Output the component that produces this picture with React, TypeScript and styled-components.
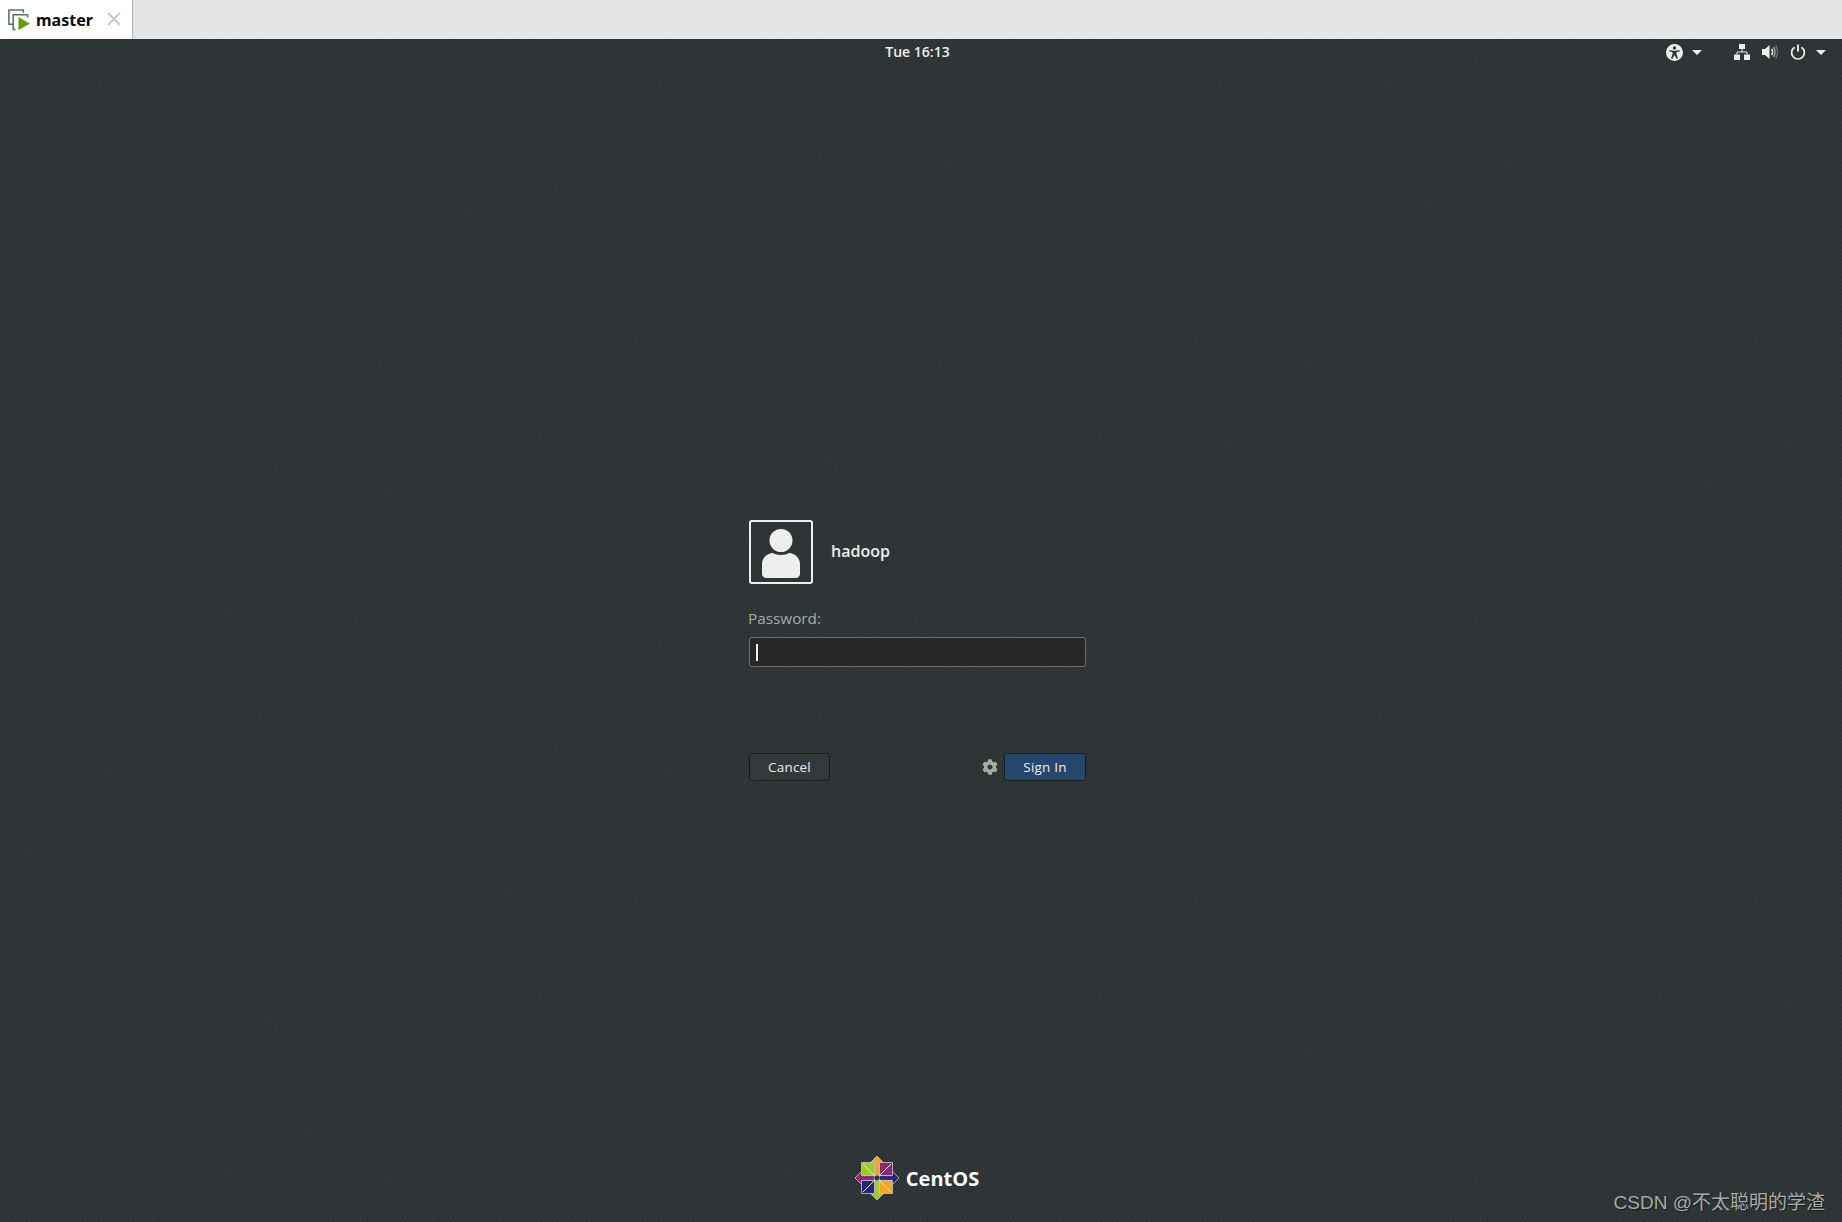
import React from "react";
import styled, { createGlobalStyle } from "styled-components";
import { FaCog } from "react-icons/fa";

const GlobalStyle = createGlobalStyle`
    html, body {
        margin: 0;
        height: 100%;
        background: #2e3436;
    }
    #root {
        height: 100%;
    }
`;

const App: React.FC = () => {
    return (
        <Page>
            <GlobalStyle />
            <TabBar>
                <Tab>
                    <VmIcon />
                    <TabTitle>master</TabTitle>
                    <CloseIcon />
                </Tab>
            </TabBar>
            <Screen>
                <TopBar>
                    <span />
                    <Clock>Tue 16:13</Clock>
                    <StatusArea>
                        <AccessGroup>
                            <AccessibilityIcon />
                            <Caret />
                        </AccessGroup>
                        <SystemGroup>
                            <NetworkIcon />
                            <VolumeIcon />
                            <PowerGroup>
                                <PowerIcon />
                                <Caret />
                            </PowerGroup>
                        </SystemGroup>
                    </StatusArea>
                </TopBar>
                <Login>
                    <UserRow>
                        <Avatar>
                            <AvatarIcon />
                        </Avatar>
                        <UserName>hadoop</UserName>
                    </UserRow>
                    <PasswordLabel>Password:</PasswordLabel>
                    <Entry>
                        <TextCursor />
                    </Entry>
                    <Buttons>
                        <Button>Cancel</Button>
                        <RightButtons>
                            <GearIcon />
                            <Button primary>Sign In</Button>
                        </RightButtons>
                    </Buttons>
                </Login>
                <Brand>
                    <CentosMark />
                    <BrandName>CentOS</BrandName>
                </Brand>
            </Screen>
            <Watermark>CSDN @不太聪明的学渣</Watermark>
        </Page>
    );
};

const VmIcon = () => (
    <svg width="23" height="23" viewBox="0 0 24 24" fill="none">
        <path d="M7 17H2V2h15v3" stroke="#5c6b78" strokeWidth="1.6" />
        <path d="M9 22.5H6.5V7H21.5v3" stroke="#5c6b78" strokeWidth="1.6" />
        <path d="M12 9.5L24 16.5L12 23Z" fill="#5aa012" />
    </svg>
);

const CloseIcon = () => (
    <CloseSvg width="14" height="14" viewBox="0 0 14 14">
        <path d="M1 1L13 13M13 1L1 13" stroke="#c8c8c8" strokeWidth="2" />
    </CloseSvg>
);

const Caret = () => (
    <svg width="10" height="5" viewBox="0 0 10 5">
        <path d="M0 0H10L5 5Z" fill="#eeeeec" />
    </svg>
);

const AccessibilityIcon = () => (
    <svg width="17" height="17" viewBox="0 0 17 17">
        <circle cx="8.5" cy="8.5" r="8.5" fill="#eeeeec" />
        <circle cx="8.5" cy="4" r="1.7" fill="#2e3436" />
        <path
            d="M3.5 6L7 6.7H10L13.5 6L13.8 7.2L10.5 8.2V10.2L12 14.5L10.8 15L8.5 11L6.2 15L5 14.5L6.5 10.2V8.2L3.2 7.2Z"
            fill="#2e3436"
        />
    </svg>
);

const NetworkIcon = () => (
    <svg width="16" height="16" viewBox="0 0 16 16">
        <rect x="5" y="0" width="6" height="5" fill="#eeeeec" />
        <rect x="0" y="10.5" width="6" height="5.5" fill="#eeeeec" />
        <rect x="10" y="10.5" width="6" height="5.5" fill="#eeeeec" />
        <path d="M8 5V8M3 10.5V8H13V10.5" stroke="#eeeeec" strokeWidth="1" fill="none" />
    </svg>
);

const VolumeIcon = () => (
    <svg width="16" height="16" viewBox="0 0 16 16" fill="none">
        <path d="M0 5H3L7.5 1V15L3 11H0Z" fill="#eeeeec" />
        <path d="M9.5 5C10.8 6.6 10.8 9.4 9.5 11" stroke="#eeeeec" strokeWidth="1.6" />
        <path d="M11.5 3.2C13.5 5.8 13.5 10.2 11.5 12.8" stroke="#a6a8a6" strokeWidth="1.4" />
        <path d="M13.5 1.5C16.2 5 16.2 11 13.5 14.5" stroke="#6a6e6e" strokeWidth="1.4" />
    </svg>
);

const PowerIcon = () => (
    <svg width="16" height="16" viewBox="0 0 16 16" fill="none">
        <path d="M4.6 3.2A6.4 6.4 0 1 0 11.4 3.2" stroke="#eeeeec" strokeWidth="1.7" />
        <path d="M8 0.5V7.5" stroke="#eeeeec" strokeWidth="1.9" />
    </svg>
);

const AvatarIcon = () => (
    <svg width="38" height="50" viewBox="0 0 38 50">
        <circle cx="19" cy="12.5" r="11.5" fill="#eeeeec" />
        <path
            d="M0 46V36C0 30 5 25 11 25C14 27.5 24 27.5 27 25C33 25 38 30 38 36V46C38 48 36 50 34 50H4C2 50 0 48 0 46Z"
            fill="#eeeeec"
        />
    </svg>
);

const GearIcon = styled(FaCog)`
    width: 16px;
    height: 16px;
    color: #a8a99f;
`;

// arrows go under the squares, their stems show in the gap between them
const CentosMark = () => (
    <svg width="46" height="46" viewBox="-23 -23 46 46">
        <g stroke="#c4c6c5" strokeWidth="0.8" strokeLinejoin="round">
            <path d="M0 -22L7.5 -14.5H2.4V-2.4H-2.4V-14.5H-7.5Z" fill="#efa724" />
            <path d="M22 0L14.5 7.5V2.4H2.4V-2.4H14.5V-7.5Z" fill="#262577" />
            <path d="M0 22L-7.5 14.5H-2.4V2.4H2.4V14.5H7.5Z" fill="#9ccd2a" />
            <path d="M-22 0L-14.5 -7.5V-2.4H-2.4V2.4H-14.5V7.5Z" fill="#932279" />
            <rect x="-15.5" y="-15.5" width="13" height="13" fill="#9ccd2a" />
            <rect x="2.5" y="-15.5" width="13" height="13" fill="#932279" />
            <rect x="2.5" y="2.5" width="13" height="13" fill="#efa724" />
            <rect x="-15.5" y="2.5" width="13" height="13" fill="#262577" />
        </g>
        <path d="M-14 -14L14 14M14 -14L-14 14" stroke="#e4e4e4" strokeWidth="1" />
        <circle r="2.4" fill="#2e3436" />
    </svg>
);

const Page = styled.div`
    position: relative;
    display: flex;
    flex-direction: column;
    height: 1222px;
    overflow: hidden;
    font-family: "Open Sans", "Noto Sans", sans-serif;
`;
const TabBar = styled.div`
    display: flex;
    flex: none;
    height: 39px;
    background: #e4e5e7;
`;
const Tab = styled.div`
    display: flex;
    align-items: center;
    box-sizing: border-box;
    width: 133px;
    height: 39px;
    padding-left: 7px;
    background: #ffffff;
    border-right: 1px solid #b4b4b4;
`;
const TabTitle = styled.span`
    margin-left: 6px;
    font-family: "Noto Sans", sans-serif;
    font-size: 16px;
    font-weight: 700;
    color: #0a0a14;
`;
const CloseSvg = styled.svg`
    margin-left: auto;
    margin-right: 11px;
    margin-top: -1px;
`;
const Screen = styled.div`
    display: flex;
    flex: 1;
    flex-direction: column;
    padding-right: 7px;
    background-color: #2e3436;
    background-image:
        repeating-linear-gradient(45deg, rgba(255, 255, 255, 0.018) 0 1px, transparent 1px 3px),
        repeating-linear-gradient(-45deg, rgba(0, 0, 0, 0.06) 0 1px, transparent 1px 4px),
        repeating-linear-gradient(90deg, rgba(255, 255, 255, 0.01) 0 1px, transparent 1px 5px);
`;
const TopBar = styled.div`
    display: grid;
    flex: none;
    grid-template-columns: 1fr auto 1fr;
    align-items: center;
    box-sizing: border-box;
    height: 27px;
`;
const Clock = styled.div`
    margin-bottom: 2px;
    font-size: 14px;
    font-weight: 600;
    color: #eeeeec;
`;
const StatusArea = styled.div`
    display: flex;
    align-items: center;
    justify-self: end;
    gap: 32px;
    padding-right: 9px;
    padding-bottom: 1px;
`;
const AccessGroup = styled.div`
    display: flex;
    align-items: center;
    gap: 9px;
`;
const SystemGroup = styled.div`
    display: flex;
    align-items: center;
    gap: 12px;
`;
const PowerGroup = styled.div`
    display: flex;
    align-items: center;
    gap: 10px;
`;
const Login = styled.div`
    display: flex;
    flex-direction: column;
    box-sizing: border-box;
    width: 337px;
    margin: 454px auto 0;
`;
const UserRow = styled.div`
    display: flex;
    align-items: center;
    gap: 18px;
`;
const Avatar = styled.div`
    display: flex;
    align-items: flex-end;
    justify-content: center;
    box-sizing: border-box;
    width: 64px;
    height: 64px;
    padding-bottom: 4px;
    border: 2px solid #eeeeec;
    border-radius: 3px;
`;
const UserName = styled.div`
    margin-bottom: 2px;
    font-size: 16px;
    font-weight: 600;
    color: #eeeeec;
`;
const PasswordLabel = styled.div`
    margin-top: 24px;
    margin-left: -1px;
    font-size: 15.3px;
    line-height: 20px;
    color: #a8aaa6;
`;
const Entry = styled.div`
    display: flex;
    align-items: center;
    box-sizing: border-box;
    height: 30px;
    margin-top: 9px;
    padding-left: 6px;
    background: #262626;
    border: 1px solid #6c7070;
    border-radius: 3px;
`;
const TextCursor = styled.span`
    width: 2px;
    height: 17px;
    background: #eeeeec;
`;
const Buttons = styled.div`
    display: flex;
    align-items: center;
    justify-content: space-between;
    margin-top: 86px;
`;
const RightButtons = styled.div`
    display: flex;
    align-items: center;
    gap: 6px;
`;
const Button = styled.div<{ primary?: boolean }>`
    display: flex;
    align-items: center;
    justify-content: center;
    box-sizing: border-box;
    width: ${(p) => (p.primary ? "82px" : "81px")};
    height: 28px;
    font-size: 13.5px;
    letter-spacing: 0.2px;
    color: #eeeeec;
    background: ${(p) => (p.primary ? "#26476d" : "#33393b")};
    border: 1px solid #1c1f1f;
    border-radius: 3px;
`;
const Brand = styled.div`
    display: flex;
    align-items: center;
    justify-content: center;
    gap: 6px;
    margin-top: auto;
    margin-right: 2px;
    padding-bottom: 21px;
`;
const BrandName = styled.span`
    font-family: "Open Sans", sans-serif;
    font-size: 20px;
    font-weight: 700;
    color: #ffffff;
`;
const Watermark = styled.div`
    position: absolute;
    right: 17px;
    bottom: 8px;
    font-family: "Liberation Sans", "Noto Sans CJK SC", sans-serif;
    font-size: 19px;
    color: #a8aaaa;
    text-shadow: 1px 1px 1px rgba(0, 0, 0, 0.5);
`;

export default App;
